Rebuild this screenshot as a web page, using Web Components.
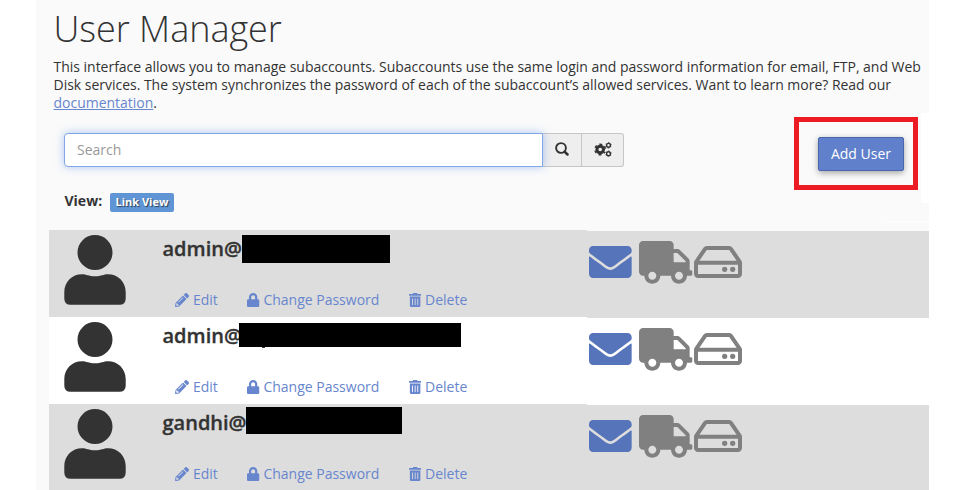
<!DOCTYPE html>
<html lang="en">
<head>
<meta charset="utf-8">
<title>User Manager</title>
<style>
html,body{margin:0;height:490px;overflow:hidden;background:#fff}
body{font:14px/18px "Open Sans","Noto Sans",sans-serif;color:#333}
</style>
</head>
<body>
<user-manager></user-manager>
<script>
const ICONS = {
  envelope: ['0 64 512 384', 'M502.3 190.8c3.9-3.1 9.7-.2 9.7 4.7V400c0 26.5-21.5 48-48 48H48c-26.5 0-48-21.5-48-48V195.6c0-5 5.7-7.8 9.7-4.7 22.4 17.4 52.1 39.5 154.1 113.6 21.1 15.4 56.7 47.8 92.2 47.6 35.7.3 72-32.8 92.3-47.6 102-74.1 131.6-96.3 154-113.7zM256 320c23.2.4 56.6-29.2 73.4-41.4 132.7-96.3 142.8-104.7 173.4-128.7 5.8-4.5 9.2-11.5 9.2-18.9v-19c0-26.5-21.5-48-48-48H48c-26.5 0-48 21.5-48 48v19c0 7.4 3.4 14.3 9.2 18.9 30.6 23.9 40.7 32.4 173.4 128.7 16.8 12.2 50.2 41.8 73.4 41.4z'],
  truck: ['0 0 640 512', 'M624 352h-16V243.9c0-12.7-5.1-24.9-14.1-33.9L494 110.1c-9-9-21.2-14.1-33.9-14.1H416V48c0-26.5-21.5-48-48-48H48C21.5 0 0 21.5 0 48v320c0 26.5 21.5 48 48 48h16c0 53 43 96 96 96s96-43 96-96h128c0 53 43 96 96 96s96-43 96-96h48c8.8 0 16-7.2 16-16v-32c0-8.8-7.2-16-16-16zM160 464c-26.5 0-48-21.5-48-48s21.5-48 48-48 48 21.5 48 48-21.5 48-48 48zm320 0c-26.5 0-48-21.5-48-48s21.5-48 48-48 48 21.5 48 48-21.5 48-48 48zm80-208H416V144h44.1l99.9 99.9V256z'],
  disk: ['0 64 576 384', 'M567.4 236.6L462.3 84.6A48 48 0 0 0 422.8 64H153.2a48 48 0 0 0-39.5 20.6L8.6 236.6A48 48 0 0 0 0 263.9V400c0 26.5 21.5 48 48 48h480c26.5 0 48-21.5 48-48V263.9a48 48 0 0 0-8.6-27.3zM153.2 112h269.6l88.5 128H64.7zM528 400H48V288h480zm-32-56a32 32 0 1 1-64 0 32 32 0 0 1 64 0zm-96 0a32 32 0 1 1-64 0 32 32 0 0 1 64 0z'],
  lock: ['0 0 448 512', 'M400 224h-24v-72C376 68.2 307.8 0 224 0S72 68.2 72 152v72H48c-26.5 0-48 21.5-48 48v192c0 26.5 21.5 48 48 48h352c26.5 0 48-21.5 48-48V272c0-26.5-21.5-48-48-48zm-104 0H152v-72c0-39.7 32.3-72 72-72s72 32.3 72 72v72z'],
  trash: ['0 0 448 512', 'M32 464a48 48 0 0 0 48 48h288a48 48 0 0 0 48-48V128H32zm272-256a16 16 0 0 1 32 0v224a16 16 0 0 1-32 0zm-96 0a16 16 0 0 1 32 0v224a16 16 0 0 1-32 0zm-96 0a16 16 0 0 1 32 0v224a16 16 0 0 1-32 0zM432 32H312l-9.4-18.7A24 24 0 0 0 281.1 0H166.8a23.7 23.7 0 0 0-21.4 13.3L136 32H16A16 16 0 0 0 0 48v32a16 16 0 0 0 16 16h416a16 16 0 0 0 16-16V48a16 16 0 0 0-16-16z'],
  pencil: ['0 0 512 512', 'M497.9 142.1l-46.1 46.1c-4.7 4.7-12.3 4.7-17 0l-111-111c-4.7-4.7-4.7-12.3 0-17l46.1-46.1c18.7-18.7 49.1-18.7 67.9 0l60.1 60.1c18.8 18.7 18.8 49.1 0 67.9zM284.2 99.8L21.6 362.4.4 483.9c-2.9 16.4 11.4 30.6 27.8 27.8l121.5-21.3 262.6-262.6c4.7-4.7 4.7-12.3 0-17l-111-111c-4.8-4.7-12.4-4.7-17.1 0zM124.1 339.9c-5.5-5.5-5.5-14.3 0-19.8l154-154c5.5-5.5 14.3-5.5 19.8 0s5.5 14.3 0 19.8l-154 154c-5.5 5.500-14.300 5.500-19.800 0zM88 424h48v36.300l-64.500 11.300-31.100-31.100L51.700 376H88v48z'],
  user: ['0 0 62 70', 'M31 0a17.5 17.5 0 1 1 0 35a17.5 17.5 0 0 1 0-35zM18 39.3C22.5 39.3 24.5 41.3 31 41.3S39.500 39.300 44 39.300C54 39.300 61.700 47 61.700 57V63.500Q61.700 69.800 55.400 69.800H6.600Q.3 69.800.3 63.500V57C.3 47 8 39.300 18 39.300z']
};
// One gear: a ring plus evenly spaced square teeth.
function gear(cx, cy, r, stroke, tooth, n) {
  const q = r + stroke / 2 + tooth / 2 - .1, d = Math.PI * q / n;
  return `<circle cx="${cx}" cy="${cy}" r="${r}" stroke-width="${stroke}"/><circle cx="${cx}" cy="${cy}" r="${q}" stroke-width="${tooth + .2}" stroke-dasharray="${d} ${d}" stroke-dashoffset="${d / 2}" transform="rotate(30 ${cx} ${cy})"/>`;
}
const DRAWN = {
  cogs: `<svg viewBox="0 0 18 15"><g fill="none" stroke="currentColor">${gear(6.2,7.5,3.3,3,1.2,6)}${gear(14.5,3.3,1.900,1.400,.5,6)}${gear(14.5,11.7,1.900,1.400,.5,6)}</g></svg>`,
  search: `<svg viewBox="0 0 14 14"><g fill="none" stroke="currentColor" stroke-width="1.9"><circle cx="6" cy="6" r="4.9"/><path d="M9.600 9.600l2.900 2.900" stroke-width="2.500" stroke-linecap="round"/></g></svg>`
};
class UiIcon extends HTMLElement {
  connectedCallback() {
    const n = this.getAttribute('name');
    const svg = DRAWN[n] || `<svg viewBox="${ICONS[n][0]}"><path fill="currentColor" fill-rule="${n === 'user' ? 'nonzero' : 'evenodd'}" d="${ICONS[n][1]}"/></svg>`;
    this.attachShadow({mode:'open'}).innerHTML = `<style>:host{display:block;flex:none}svg{display:block;width:100%;height:100%}</style>${svg}`;
  }
}
customElements.define('ui-icon', UiIcon);

class SearchBar extends HTMLElement {
  connectedCallback() {
    this.attachShadow({mode:'open'}).innerHTML = `<style>
:host{display:flex;width:560px;height:34px}
*{box-sizing:border-box}
.field{width:479px;border:1px solid #82a7e6;border-radius:4px 0 0 4px;background:#fff;box-shadow:0 0 8px rgba(90,145,235,.5);padding:0 12px;line-height:32px;color:#999;z-index:1}
.btn{display:flex;align-items:center;justify-content:center;background:#eee;border:1px solid #c6c6c6;border-left:0;width:39px}
.last{width:42px;border-radius:0 3px 3px 0}
.s{width:14px;height:14px;margin-bottom:2px}.c{width:18px;height:15px;margin-bottom:1px}
</style><div class="field">Search</div><div class="btn"><ui-icon class="s" name="search"></ui-icon></div><div class="btn last"><ui-icon class="c" name="cogs"></ui-icon></div>`;
  }
}
customElements.define('search-bar', SearchBar);

class UserAction extends HTMLElement {
  connectedCallback() {
    const n = this.getAttribute('icon');
    this.attachShadow({mode:'open'}).innerHTML = `<style>
:host{display:flex;align-items:center;color:#6886cd;white-space:nowrap}
ui-icon{height:14px;width:${n === 'pencil' ? 14 : 12.25}px;margin-right:3.700px}
</style><ui-icon name="${n}"></ui-icon><span><slot></slot></span>`;
  }
}
customElements.define('user-action', UserAction);

class UserRow extends HTMLElement {
  connectedCallback() {
    const [x, y, w, h] = this.getAttribute('mask').split(',');
    this.attachShadow({mode:'open'}).innerHTML = `<style>
:host{display:grid;grid-template-columns:538px 342px;height:87px;--bg:#ddd}
:host([plain]){--bg:#fff}
.main{position:relative;display:flex;background:var(--bg);padding-left:15px}
.avatar{width:62px;height:70px;margin-top:5px}
.info{padding:8px 0 0 36.500px}
.name{font-size:20px;line-height:22px;font-weight:600;-webkit-text-stroke:.35px currentColor}
.links{display:flex;gap:29.700px;margin:31px 0 0 12.700px}
.mask{position:absolute;left:${x}px;top:${y}px;width:${w}px;height:${h}px;background:#000}
:host([plain]) .mask::after{content:"";position:absolute;left:23px;top:24px;width:3px;height:1px;background:#333}
.services{display:flex;background:var(--bg);transform:translateY(1px);padding:10px 0 0 2.400px;color:#808080}
.e{width:42.670px;height:32px;margin-top:5px;color:#5674b9}
.t{width:53.330px;height:42.670px;margin-left:7.200px}
.d{width:48px;height:32px;margin:5px 0 0 1.600px}
</style><div class="main"><ui-icon class="avatar" name="user"></ui-icon><div class="info"><div class="name"><slot></slot></div>
<div class="links"><user-action icon="pencil">Edit</user-action><user-action icon="lock">Change Password</user-action><user-action icon="trash">Delete</user-action></div></div><div class="mask"></div></div>
<div class="services"><ui-icon class="e" name="envelope"></ui-icon><ui-icon class="t" name="truck"></ui-icon><ui-icon class="d" name="disk"></ui-icon></div>`;
  }
}
customElements.define('user-row', UserRow);

class UserManager extends HTMLElement {
  connectedCallback() {
    this.attachShadow({mode:'open'}).innerHTML = `<style>
:host{display:block;position:relative;box-sizing:border-box;width:893px;height:490px;margin-left:36px;background:#fafafa;overflow:hidden}
*{box-sizing:border-box}
header{height:117px;padding:8px 0 0 17.500px}
h1{margin:0;font-size:36px;line-height:42px;font-weight:300;letter-spacing:-.04px}
p{margin:8px 0 0;white-space:nowrap;letter-spacing:-.018px}
a{color:#6886cd;text-decoration:underline}
.tools{display:flex;height:73px;padding-left:28px}
search-bar{margin-top:16px}
.frame{width:124px;height:73px;margin-left:170px;border:5px solid #ed1c24;display:flex;padding:15px 0 0 19px}
button{width:86px;height:34px;padding:0;border:1px solid #4a67ae;border-radius:2px;background:#6080cb;color:#fff;font:inherit;box-shadow:0 2px 6px rgba(0,0,0,.35)}
.view{height:40px;padding:3px 0 0 28.500px;display:flex;gap:7.800px}
.view b{line-height:16px}
.tag{height:19px;width:64px;border-radius:2px;background:#6095d5;color:#fff;font-size:11px;line-height:18px;font-weight:700;text-align:center;text-shadow:1px 1px 1px rgba(0,0,0,.6)}
.rows{margin-left:13px}
.patch{position:absolute;background:#fff;left:885px;top:113px;width:8px;height:90px}
.line{left:849px;top:221px;width:44px;height:1px}
</style>
<header><h1>User Manager</h1><p>This interface allows you to manage subaccounts. Subaccounts use the same login and password information for email, FTP, and Web<br>Disk services. The system synchronizes the password of each of the subaccount’s allowed services. Want to learn more? Read our<br><a>documentation</a>.</p></header>
<div class="tools"><search-bar></search-bar><div class="frame"><button>Add User</button></div></div>
<div class="view"><b>View:</b><span class="tag">Link View</span></div>
<div class="patch"></div><div class="patch line"></div>
<div class="rows"><user-row mask="193,5,148,28">admin@</user-row><user-row plain mask="190,6,222,24">admin@</user-row><user-row mask="197,3,156,27">gandhi@</user-row></div>`;
  }
}
customElements.define('user-manager', UserManager);
</script>
</body>
</html>
